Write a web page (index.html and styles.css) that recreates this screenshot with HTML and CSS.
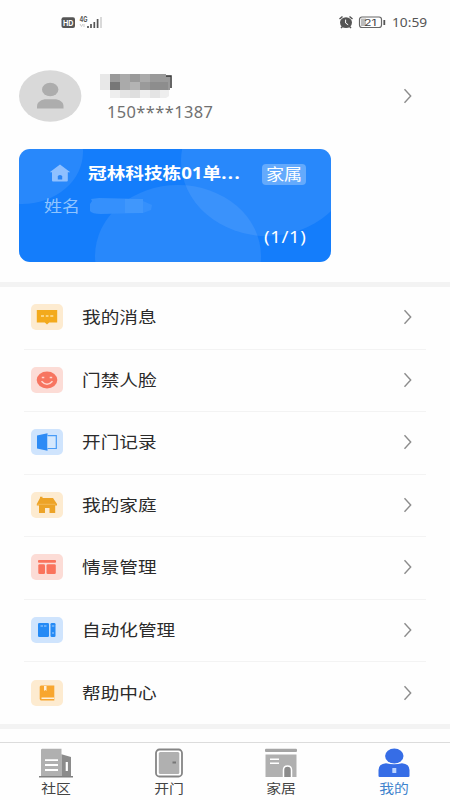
FILE: index.html
```html
<!DOCTYPE html>
<html lang="zh-CN">
<head>
<meta charset="utf-8">
<title>我的</title>
<link rel="stylesheet" href="styles.css">
</head>
<body>
<div class="screen">
  <header class="status">
    <svg class="status-left" width="42" height="14" viewBox="0 0 42 14">
      <rect x="0.5" y="2.3" width="13.5" height="10.7" rx="2" fill="#555"/>
      <text x="2" y="11" class="hd" textLength="10.5" lengthAdjust="spacingAndGlyphs">HD</text>
      <text x="18.5" y="7" class="net" textLength="8" lengthAdjust="spacingAndGlyphs">4G</text>
      <path d="M19 9l1.5 2.5L22 9m1 0v3" stroke="#ccc" fill="none"/>
      <path d="M27 13v-2M30 13v-4M33.300 13v-6M36.600 13V4" stroke="#555" stroke-width="1.700"/>
      <path d="M40 13V2" stroke="#ccc" stroke-width="1.500"/>
    </svg>
    <div class="status-right">
      <svg width="48" height="14" viewBox="0 0 48 14">
        <ellipse cx="8" cy="7.600" rx="6" ry="5.400" fill="#555"/>
        <path d="M1.500 4l3-2.500M14.500 4l-3-2.500M3 13l2-2M13 13l-2-2" stroke="#555" stroke-width="1.500"/>
        <path d="M7.600 4.600v3.400l2.600 1.800" stroke="#fff" stroke-width="1" fill="none"/>
        <rect x="21.500" y="2" width="22" height="10.500" rx="2.500" fill="#fff" stroke="#666" stroke-width="1.200"/>
        <rect x="23" y="3.500" width="5" height="7.500" fill="#bbb"/>
        <text x="26" y="10.500" class="battery" textLength="12.500" lengthAdjust="spacingAndGlyphs">21</text>
        <path d="M46.300 5v5" stroke="#555" stroke-width="1.800"/>
      </svg>
      <span class="time">10:59</span>
    </div>
  </header>

  <section class="profile">
    <svg class="avatar" width="63" height="52" viewBox="0 0 63 52">
      <ellipse cx="31.200" cy="26" rx="31.200" ry="25.700" fill="#d9d9d9"/>
      <ellipse cx="31.200" cy="19.500" rx="8.200" ry="6.800" fill="#adadad"/>
      <path d="M18 38.500v-2.300c0-4.300 4.500-7 9.500-7H35c5.500 0 9.500 2.700 9.500 7v2.300z" fill="#adadad"/>
    </svg>
    <div class="identity">
      <svg class="mosaic" width="74" height="26" viewBox="0 0 74 26">
        <path fill="#e8e8e8" d="M0 1h10v16H0z"/><path fill="#eee" d="M10 17h10v8H10zM60 17h9v6l-3 2h-6z"/>
        <path fill="#e4e4e4" d="M20 17h10v8H20zM50 17h10v8H50z"/><path fill="#dedede" d="M30 17h10v8H30z"/><path fill="#eee" d="M40 17h10v8H40z"/>
        <path fill="#9a9a9a" d="M10 1h56v2h4v14H10z"/><path fill="#777" d="M10 9h10v8H10z"/>
        <path fill="#aaa" d="M20 1h10v16H20zM40 1h10v8H40z"/><path fill="#b3b3b3" d="M30 9h10v8H30z"/>
        <path fill="#8d8d8d" d="M50 9h18v8H50z"/><path d="M66 3h5v12" stroke="#333" stroke-width="1.500" fill="none"/>
      </svg>
      <span class="phone">150****1387</span>
    </div>
    <svg class="chevron" width="10" height="16" viewBox="0 0 10 16"><path d="M1.500 1.200l6.200 6.800-6.200 6.800"/></svg>
  </section>

  <section class="card">
    <svg class="card-art" width="312" height="113" viewBox="0 0 312 113">
      <ellipse cx="3" cy="3" rx="61" ry="52"/><ellipse cx="159" cy="107" rx="83" ry="71"/><ellipse cx="248" cy="12" rx="86" ry="75"/>
    </svg>
    <div class="card-head">
      <svg width="22" height="19" viewBox="0 0 22 19"><path d="M11 .5l10.300 7.700H18.800V16.500q0 1-1 1H4q-1 0-1-1V8.200H.7z" fill="#8fc0ff"/><path d="M8.800 15.500v-3q0-1.500 2.200-1.500t2.200 1.500v3z" fill="#2a84f4"/></svg>
      <span class="room"><span class="wide">冠林科技栋01单<span class="dots">...</span></span></span>
      <span class="badge"><span class="wide">家属</span></span>
    </div>
    <div class="card-name">
      <span class="name-label"><span class="wide">姓名</span></span>
      <svg width="64" height="18" viewBox="0 0 64 18"><path d="M2 2l8-1 44 1v2l9 4-1 5-8 3-42 1Q3 17 1 14V7l2-3z" fill="#3590fc"/><path d="M36 2h18v14H36z" fill="#4097fc"/></svg>
    </div>
    <div class="count">(1/1)</div>
  </section>

  <main class="menu">
    <div class="row"><div class="tile yellow"><svg width="22" height="18" viewBox="0 0 22 18"><path d="M.8 2h20.400v12.400h-8L11 16.500l-2.200-2.100h-8z" fill="#f3aa1c"/><path d="M5 8h3m1.800 0h2.700m1.800 0h3" stroke="#ffe2a0" stroke-width="1.500"/></svg></div><span class="label wide">我的消息</span><svg class="chevron" width="10" height="16" viewBox="0 0 10 16"><path d="M1.500 1.200l6.200 6.800-6.200 6.800"/></svg></div>
    <div class="row"><div class="tile red"><svg width="22" height="18" viewBox="0 0 22 18"><ellipse cx="11" cy="9" rx="10.300" ry="8.500" fill="#f77560"/><path d="M5.500 10.200q5.500 6 11 0M5.800 6.500h2.500m5.400 0h2.500" stroke="#ffd8d0" stroke-width="1.500" fill="none"/></svg></div><span class="label wide">门禁人脸</span><svg class="chevron" width="10" height="16" viewBox="0 0 10 16"><path d="M1.500 1.200l6.200 6.800-6.200 6.800"/></svg></div>
    <div class="row"><div class="tile blue"><svg width="22" height="18" viewBox="0 0 22 18"><path d="M1 2.500L11.500.2v17.600L1 15.500z" fill="#2d8bf5"/><path d="M11.500 2.700h8.800v12.800h-8.800" fill="#d5e8fd" stroke="#489bf7" stroke-width="1.200"/></svg></div><span class="label wide">开门记录</span><svg class="chevron" width="10" height="16" viewBox="0 0 10 16"><path d="M1.500 1.200l6.200 6.800-6.200 6.800"/></svg></div>
    <div class="row"><div class="tile yellow"><svg width="22" height="18" viewBox="0 0 22 18"><path d="M4 2V.8h2.500V2H17l4 6v1.500h-1.800V17h-5.700v-5H9v5H3V9.500H.8V8z" fill="#eda326"/><path d="M1.500 8.300h18" stroke="#f9c876" fill="none" stroke-width=".6"/></svg></div><span class="label wide">我的家庭</span><svg class="chevron" width="10" height="16" viewBox="0 0 10 16"><path d="M1.500 1.200l6.200 6.800-6.200 6.800"/></svg></div>
    <div class="row"><div class="tile red"><svg width="22" height="18" viewBox="0 0 22 18" fill="#fa735c"><rect x="2" y="2" width="18" height="2.800" rx="1"/><rect x="2.300" y="6.300" width="6.700" height="9.700" rx="1.300"/><rect x="10.500" y="6.300" width="9.300" height="9.700" rx="1.300"/></svg></div><span class="label wide">情景管理</span><svg class="chevron" width="10" height="16" viewBox="0 0 10 16"><path d="M1.500 1.200l6.200 6.800-6.200 6.800"/></svg></div>
    <div class="row"><div class="tile blue"><svg width="22" height="18" viewBox="0 0 22 18"><rect x="2" y="2" width="11" height="14" rx="1.300" fill="#258af5"/><rect x="14.500" y="2" width="5" height="14" rx="1.300" fill="#258af5"/><path d="M4.500 5H7m1 0h2.500m5.300 0h2.500M17 11v2" stroke="#a9d2ff" stroke-width="1"/></svg></div><span class="label wide">自动化管理</span><svg class="chevron" width="10" height="16" viewBox="0 0 10 16"><path d="M1.500 1.200l6.200 6.800-6.200 6.800"/></svg></div>
    <div class="row"><div class="tile yellow"><svg width="22" height="18" viewBox="0 0 22 18"><path d="M5 1.500h13.300v15H5q-1.300 0-1.300-2V3q0-1.500 1.300-1.500z" fill="#f8a62e"/><path d="M8 2h2.500v5L9.300 6 8 7zM5.500 13.500H18v1.500H5.500z" fill="#fff0d9"/></svg></div><span class="label wide">帮助中心</span><svg class="chevron" width="10" height="16" viewBox="0 0 10 16"><path d="M1.500 1.200l6.200 6.800-6.200 6.800"/></svg></div>
  </main>

  <nav class="tabs">
    <div class="tab"><svg width="34" height="30" viewBox="0 0 34 30"><path d="M2 1.500L3 .7h19.500v28H2z" fill="#b0b0b0"/><path d="M22.500 6.300L32 9v19.700h-9.500z" fill="#8b8b8b"/><path d="M0 28.700h34" stroke="#808080" stroke-width="1.500"/><path d="M6 12.200h13M6 17h13M6 22h13" stroke="#fff" stroke-width="1.800"/><path d="M27.800 14v9" stroke="#fff" stroke-width="2.200"/></svg><span class="tab-label">社区</span></div>
    <div class="tab"><svg width="34" height="30" viewBox="0 0 34 30"><rect x="4" y="1.500" width="26" height="27" rx="3.500" fill="#fff" stroke="#858585" stroke-width="1.800"/><rect x="6.800" y="4" width="20.500" height="22" rx="1.500" fill="#b0b0b0"/><path d="M20.500 14.500h3.500" stroke="#777" stroke-width="2"/></svg><span class="tab-label">开门</span></div>
    <div class="tab"><svg width="34" height="30" viewBox="0 0 34 30"><rect x="1" y=".8" width="32" height="3.200" rx="1" fill="#a5a5a5"/><path d="M1.500 6.500h31V29h-31z" fill="#b0b0b0"/><path d="M6 11.200h9M6 15.300h9" stroke="#fff" stroke-width="1.500"/><path d="M19.500 29v-7q0-4 4-4t4 4v7" fill="#8b8b8b" stroke="#fff" stroke-width="1.500"/></svg><span class="tab-label">家居</span></div>
    <div class="tab active"><svg width="34" height="30" viewBox="0 0 34 30"><ellipse cx="17.300" cy="8" rx="9.200" ry="7.500" fill="#366de6"/><path d="M1.500 28V22q0-6 7.500-6.800 8 2 16 0 7.500.8 7.500 6.800v6q0 1-1.200 1H2.700q-1.200 0-1.200-1z" fill="#366de6"/><rect x="15.300" y="20" width="4" height="5" rx=".5" fill="#bcd4ff"/></svg><span class="tab-label">我的</span></div>
  </nav>
</div>
</body>
</html>
```
FILE: styles.css
```css
* { box-sizing: border-box; }
body {
  margin: 0;
  background: #fefefe;
  color: #2b2b2b;
  font-family: "Noto Sans", "Noto Sans CJK SC", sans-serif;
}
.screen { height: 800px; display: flex; flex-direction: column; overflow: hidden; }
svg { display: block; flex: none; }
.wide { display: inline-block; transform: scaleX(1.165); transform-origin: left center; white-space: nowrap; }

.status { height: 66px; padding: 15px 21px 0 61px; display: flex; justify-content: space-between; align-items: flex-start; }
.status-right { display: flex; gap: 6px; }
.time { width: 37px; font: 12.5px/16px "Noto Sans", sans-serif; color: #555; transform: scaleX(1.1); transform-origin: left; white-space: nowrap; }
.hd { font: bold 8px Inter, sans-serif; fill: #fff; }
.net { font: bold 7px Inter, sans-serif; fill: #555; }
.battery { font: 8.5px Inter, sans-serif; fill: #444; }

.profile { height: 83px; padding: 4px 37px 0 19px; display: flex; align-items: flex-start; }
.identity { flex: 1; padding: 3px 0 0 18px; }
.phone { display: block; margin: 3px 0 0 7px; font: 16px/20px "Noto Sans", sans-serif; color: #707070; letter-spacing: .4px; transform: scaleX(1.025); transform-origin: left; white-space: nowrap; }
.chevron { fill: none; stroke: #8c8c8c; stroke-width: 1.4; }
.profile .chevron { margin-top: 18px; }

.card { position: relative; width: 312px; height: 113px; margin-left: 19px; flex: none; border-radius: 11px; overflow: hidden; background: #147dfb; color: #fff; }
.card-art { position: absolute; inset: 0; fill: #fff; fill-opacity: .085; }
.card-head, .card-name, .count { position: relative; }
.card-head { display: flex; align-items: center; height: 24px; margin-top: 12px; padding-left: 30px; }
.room { width: 158px; margin-left: 17px; font-weight: 700; font-size: 16px; line-height: 24px; }
.room .wide { transform: scaleX(1.165); }
.dots { letter-spacing: 1.2px; }
.badge { width: 44px; height: 21px; margin: 3px 0 0 16px; padding-left: 4px; border-radius: 4px; background: #64aafc; font-size: 15.5px; line-height: 21px; }
.card-name { display: flex; align-items: center; height: 24px; margin-top: 9px; padding-left: 25px; gap: 9px; color: #8fc4ff; }
.name-label { width: 36px; font-size: 15.5px; line-height: 24px; }
.count { width: 44px; margin: 9px 0 0 245px; font-size: 15.5px; line-height: 20px; letter-spacing: .5px; transform: scaleX(1.2); transform-origin: left; white-space: nowrap; }

.menu { height: 447px; margin-top: 20px; flex: none; border-top: 5px solid #f3f3f3; border-bottom: 5px solid #f3f3f3; }
.row { display: flex; align-items: center; height: 62.5px; margin: 0 24px; padding: 0 13px 1px 7px; border-bottom: 1.5px solid #f3f3f3; }
.row:last-child { border: 0; }
.tile { width: 32px; height: 26px; display: grid; place-items: center; border-radius: 5px; }
.yellow { background: #fdebd0; }
.red { background: #fcdcd6; }
.blue { background: #cfe4fd; }
.label { flex: 1; margin-left: 18.5px; font-size: 16px; line-height: 24px; }

.tabs { display: grid; grid-template-columns: repeat(4, 1fr); height: 58px; margin-top: 13px; flex: none; border-top: 1px solid #dcdcdc; }
.tab { display: flex; flex-direction: column; align-items: center; padding-top: 5px; color: #444; }
.tab-label { margin-top: 1px; font-size: 13px; line-height: 18px; transform: scaleX(1.14); }
.active { color: #3f83cd; }
```
